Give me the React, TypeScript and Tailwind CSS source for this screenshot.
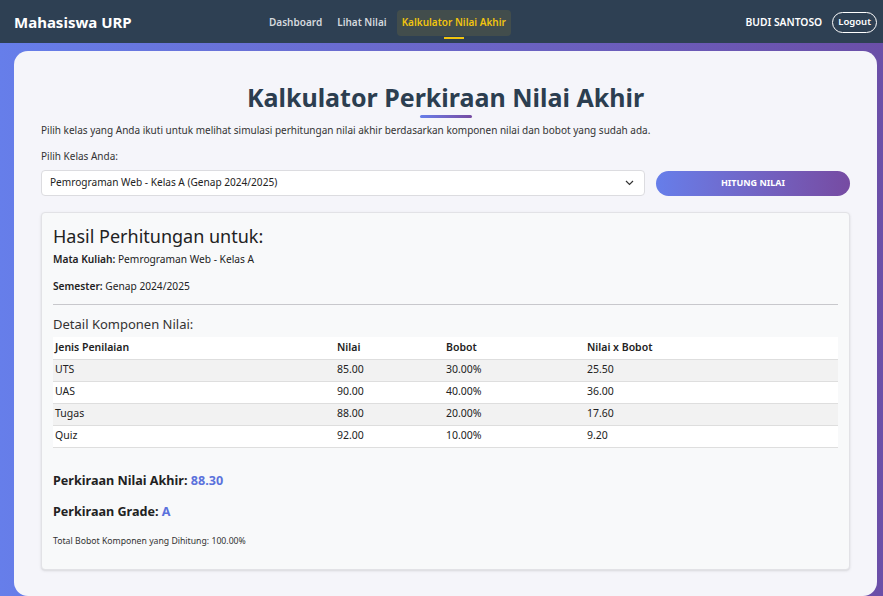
import React from "react";

const rows = [
  { j: "UTS", n: "85.00", b: "30.00%", nb: "25.50" },
  { j: "UAS", n: "90.00", b: "40.00%", nb: "36.00" },
  { j: "Tugas", n: "88.00", b: "20.00%", nb: "17.60" },
  { j: "Quiz", n: "92.00", b: "10.00%", nb: "9.20" },
];

export default function App() {
  return (
    <div
      className="w-[883px] h-[596px] overflow-hidden flex flex-col bg-gradient-to-r from-[#667eea] to-[#6b4fa8] text-[#222]"
      style={{ fontFamily: '"Noto Sans", "Open Sans", sans-serif' }}
    >
      <nav className="h-[43px] shrink-0 bg-[#2e4053] flex items-center pl-[14px] pr-[6px] pt-[2px]">
        <div className="text-white font-bold text-[15px] w-[250px]">Mahasiswa URP</div>
        <div className="flex items-center text-[10px] font-semibold">
          <span className="text-[#d5d9de] px-[5px]">Dashboard</span>
          <span className="text-[#d5d9de] px-[5px] ml-[5px]">Lihat Nilai</span>
          <span className="relative text-[#f1c40f] bg-[#f1c40f]/10 rounded-[4px] px-[5px] h-[26px] flex items-center ml-[5px]">
            Kalkulator Nilai Akhir
            <span className="absolute left-1/2 -translate-x-1/2 bottom-[-3px] w-[20px] h-[2px] bg-[#f1c40f]" />
          </span>
        </div>
        <div className="ml-auto flex items-center gap-[10px]">
          <span className="text-white font-semibold text-[10.3px]">BUDI SANTOSO</span>
          <span className="text-white font-semibold text-[9.5px] border border-white rounded-full px-[5px] h-[21px] flex items-center">
            Logout
          </span>
        </div>
      </nav>
      <div className="flex-1 pl-[14px] pr-[6px] pt-[8px] flex flex-col">
        <div className="flex-1 bg-[#f5f5fa] rounded-[14px] px-[27px] pt-[29px] flex flex-col">
          <h1 className="text-center text-[25px] font-bold text-[#2c3e50] leading-[34px]">
            Kalkulator Perkiraan Nilai Akhir
          </h1>
          <div className="mx-auto mt-[1px] w-[52px] h-[3px] rounded bg-gradient-to-r from-[#667eea] to-[#764ba2]" />
          <p className="mt-[5px] text-[10px] leading-[15px] text-[#333]">
            Pilih kelas yang Anda ikuti untuk melihat simulasi perhitungan nilai akhir berdasarkan komponen nilai dan bobot yang sudah ada.
          </p>
          <div className="mt-[11px] text-[10px] leading-[15px] text-[#333]">Pilih Kelas Anda:</div>
          <div className="mt-[6px] flex items-center gap-[11px]">
            <div className="w-[604px] h-[26px] bg-white border border-[#dcdce0] rounded-[4px] flex items-center pl-[8px] pr-[10px] text-[10.1px] text-[#222]">
              <span>Pemrograman Web - Kelas A (Genap 2024/2025)</span>
              <svg className="ml-auto" width="9" height="6" viewBox="0 0 9 6" fill="none">
                <path d="M1 1l3.5 3.5L8 1" stroke="#333" strokeWidth="1.2" />
              </svg>
            </div>
            <div className="w-[194px] h-[25px] rounded-full bg-gradient-to-r from-[#667eea] to-[#764ba2] text-white font-bold text-[9px] flex items-center justify-center">
              HITUNG NILAI
            </div>
          </div>
          <div className="mt-[16px] bg-[#f8f9fa] border border-[#e2e2e6] rounded-[4px] shadow-sm px-[11px] pt-[11px] h-[358px]">
            <h2 className="text-[18px] leading-[24px] text-[#222]">Hasil Perhitungan untuk:</h2>
            <p className="mt-[4px] text-[10.2px] leading-[15px]"><b className="font-semibold">Mata Kuliah:</b> Pemrograman Web - Kelas A</p>
            <p className="mt-[12px] text-[10.2px] leading-[15px]"><b className="font-semibold">Semester:</b> Genap 2024/2025</p>
            <div className="mt-[10px] h-px bg-[#c8c8cc]" />
            <h3 className="mt-[10px] text-[13px] leading-[19px] text-[#333]">Detail Komponen Nilai:</h3>
            <table className="mt-[3px] w-full text-[10.5px] border-collapse">
              <thead>
                <tr className="bg-white h-[22px]">
                  <th className="text-left font-semibold pl-[2px] w-[282px]">Jenis Penilaian</th>
                  <th className="text-left font-semibold pl-[2px] w-[109px]">Nilai</th>
                  <th className="text-left font-semibold pl-[2px] w-[141px]">Bobot</th>
                  <th className="text-left font-semibold pl-[2px]">Nilai x Bobot</th>
                </tr>
              </thead>
              <tbody>
                {rows.map((r, i) => (
                  <tr key={r.j} className={`h-[22px] border-t border-[#dedede] ${i % 2 === 0 ? "bg-[#f2f2f2]" : "bg-white"} ${i === rows.length - 1 ? "border-b" : ""}`}>
                    <td className="pl-[2px]">{r.j}</td>
                    <td className="pl-[2px]">{r.n}</td>
                    <td className="pl-[2px]">{r.b}</td>
                    <td className="pl-[2px]">{r.nb}</td>
                  </tr>
                ))}
              </tbody>
            </table>
            <p className="mt-[24px] text-[12.6px] leading-[18px] font-bold text-[#222]">
              Perkiraan Nilai Akhir: <span className="text-[#5b72dc]">88.30</span>
            </p>
            <p className="mt-[13px] text-[12.6px] leading-[18px] font-bold text-[#222]">
              Perkiraan Grade: <span className="text-[#5b72dc]">A</span>
            </p>
            <p className="mt-[14px] text-[8.7px] leading-[12px] text-[#333]">Total Bobot Komponen yang Dihitung: 100.00%</p>
          </div>
        </div>
      </div>
    </div>
  );
}
